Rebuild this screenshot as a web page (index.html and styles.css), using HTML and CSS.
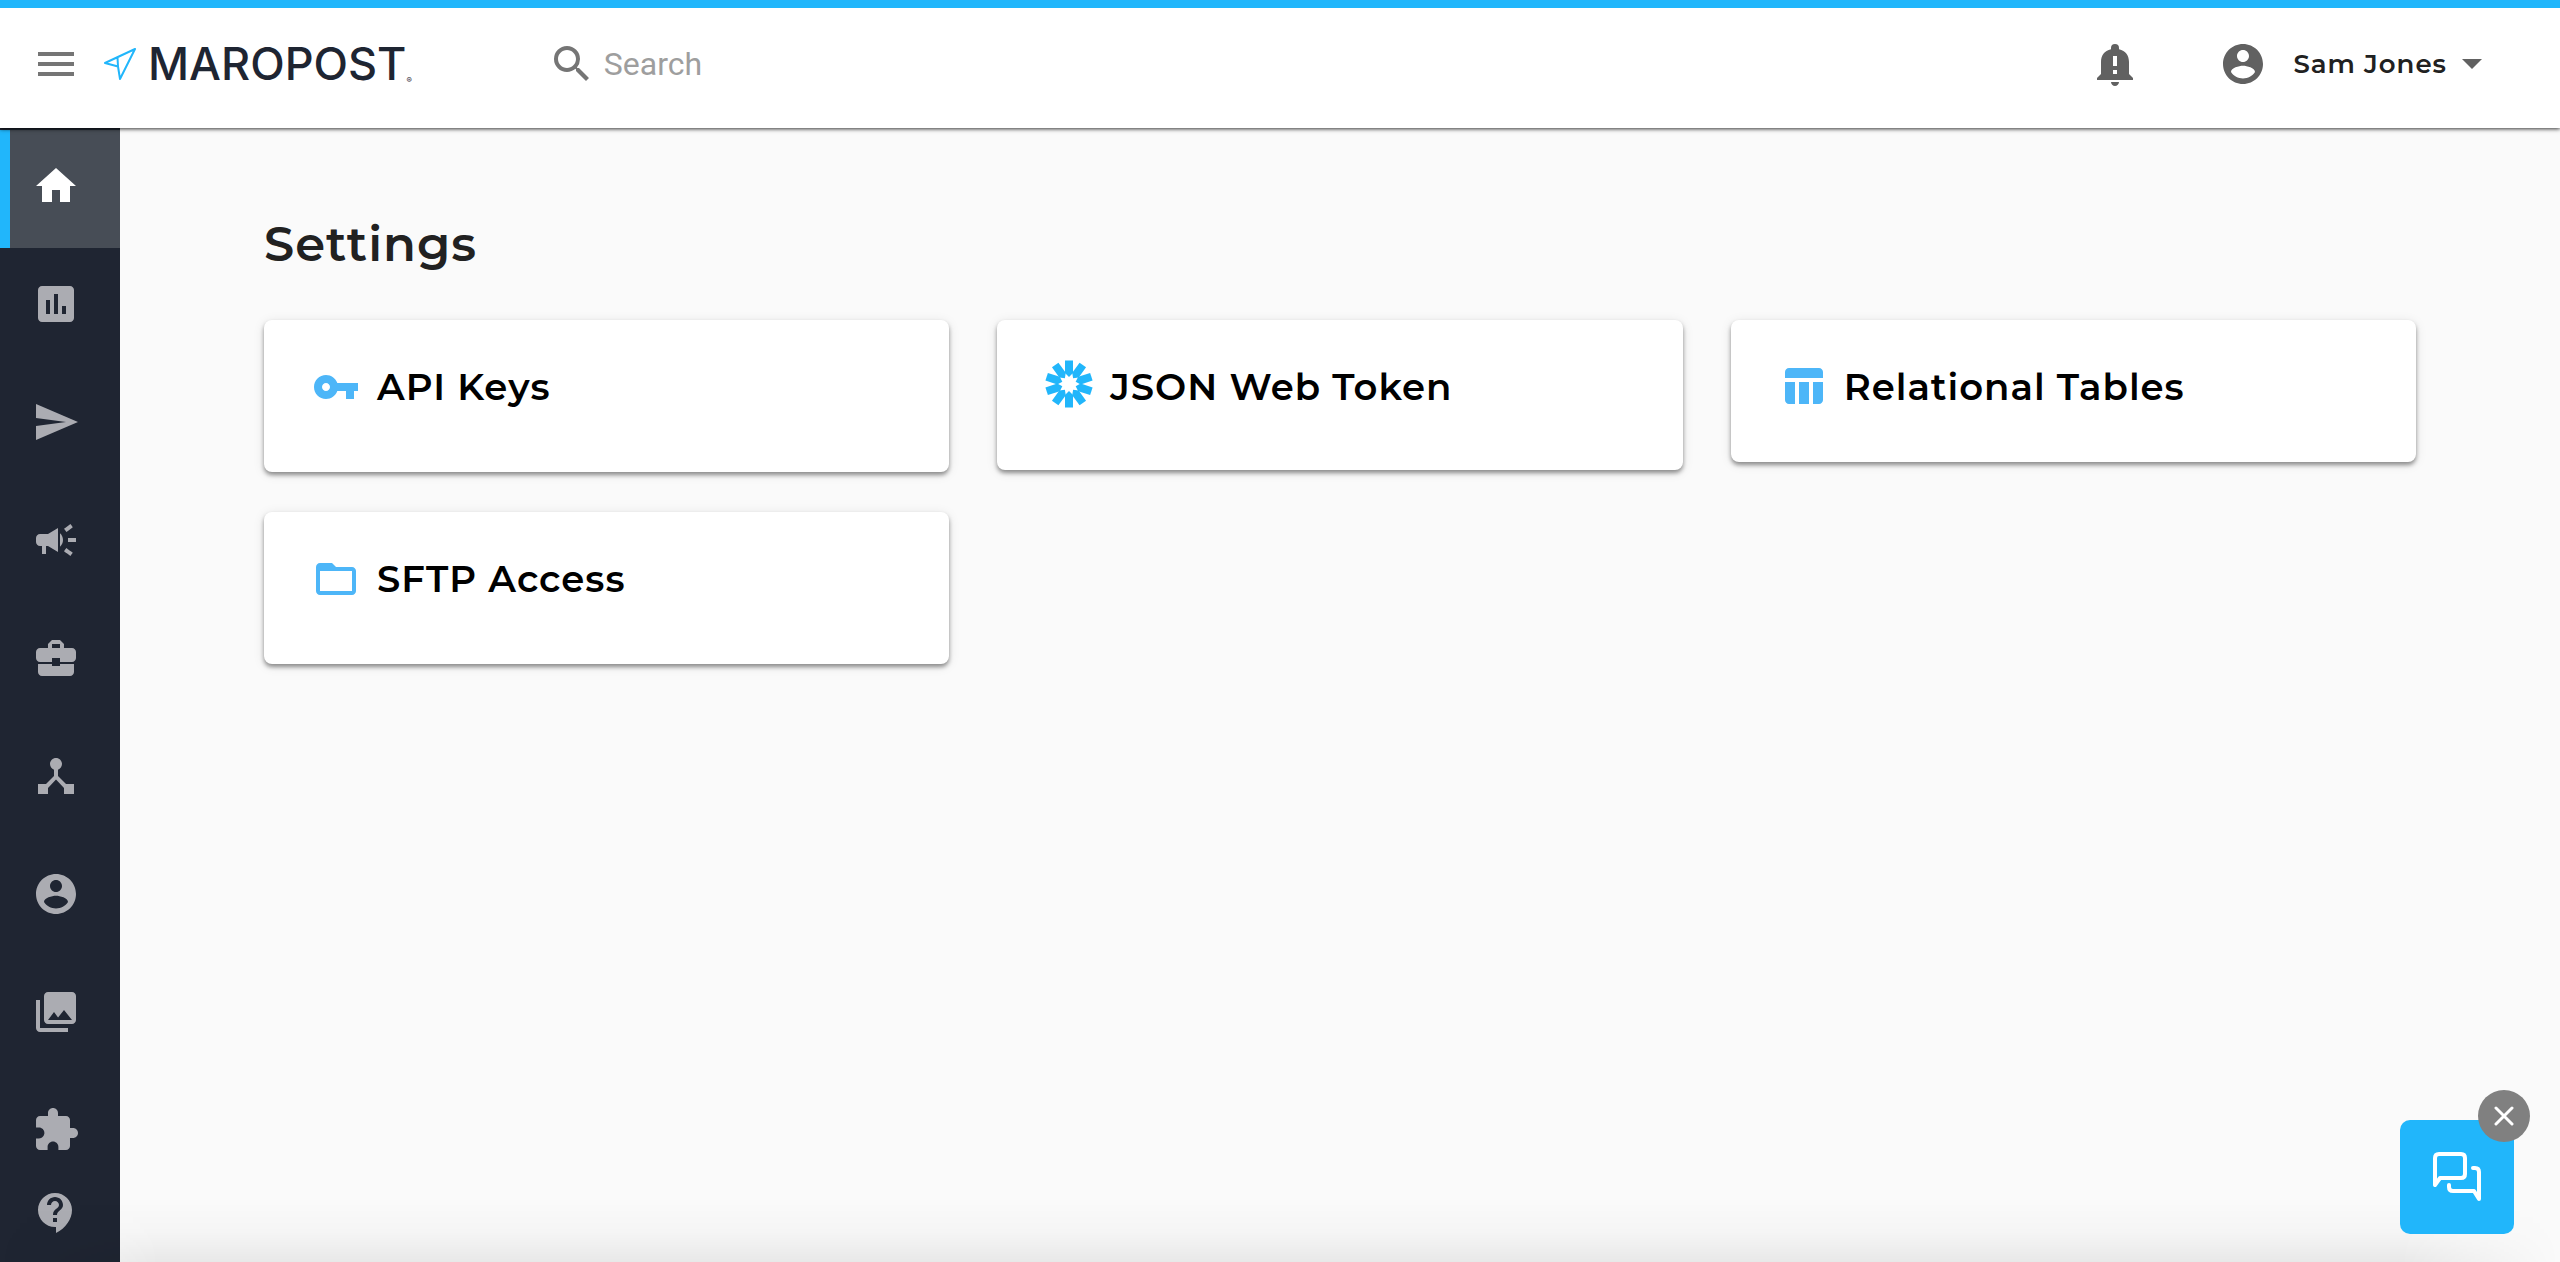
FILE: index.html
```html
<!DOCTYPE html>
<html lang="en">
<head>
<meta charset="utf-8">
<meta name="viewport" content="width=device-width, initial-scale=1">
<title>Settings - Maropost</title>
<link rel="stylesheet" href="styles.css">
</head>
<body>
<header class="topbar">
  <button class="icon-button menu-button" type="button" aria-label="Menu">
    <svg class="icon" viewBox="0 0 24 24"><path d="M3 18h18v-2H3v2zm0-5h18v-2H3v2zm0-7v2h18V6H3z"/></svg>
  </button>
  <a class="brand" href="#" aria-label="Maropost">
    <svg class="brand-mark" viewBox="0 0 32 32"><path d="M31 1 L1 15 L14 18.500 L16 31 Z M14 18.500 L13.500 9.500"/></svg>
    <span class="brand-name">MAROPOST</span><span class="brand-dot">®</span>
  </a>
  <label class="search">
    <svg class="icon" viewBox="0 0 24 24"><path d="M15.500 14h-.79l-.28-.27A6.471 6.471 0 0 0 16 9.500 6.500 6.500 0 1 0 9.500 16c1.610 0 3.090-.59 4.230-1.570l.27.280v.79l5 4.990L20.490 19l-4.990-5zm-6 0C7.010 14 5 11.990 5 9.500S7.010 5 9.500 5 14 7.010 14 9.500 11.990 14 9.500 14z"/></svg>
    <input class="search-input" type="text" placeholder="Search" aria-label="Search">
  </label>
  <button class="icon-button alert-button" type="button" aria-label="Notifications">
    <svg class="icon" viewBox="0 0 24 24"><path d="M12 23c1.100 0 2-.9 2-2h-4c0 1.100.9 2 2 2zM19 17l2 2v1H3v-1l2-2v-6c0-3.070 1.630-5.640 5-6.320V4a2 2 0 0 1 4 0v.68C17.360 5.360 19 7.920 19 11zM13 15h-2v2h2zm0-7h-2v5h2z" fill-rule="evenodd"/></svg>
  </button>
  <button class="account" type="button">
    <svg class="icon" viewBox="0 0 24 24"><path d="M12 2C6.480 2 2 6.480 2 12s4.480 10 10 10 10-4.480 10-10S17.520 2 12 2zm0 3c1.660 0 3 1.340 3 3s-1.340 3-3 3-3-1.340-3-3 1.340-3 3-3zm0 14.200c-2.500 0-4.710-1.280-6-3.220.03-1.990 4-3.080 6-3.080 1.990 0 5.970 1.090 6 3.080-1.290 1.940-3.500 3.220-6 3.220z"/></svg>
    <span class="account-name">Sam Jones</span>
    <svg class="caret" viewBox="0 0 20 10"><path d="M0 0h20L10 10z"/></svg>
  </button>
</header>
<div class="layout">
  <nav class="sidebar" aria-label="Main">
    <a class="nav-item nav-active" href="#" aria-label="Home"><svg class="icon" viewBox="0 0 24 24"><path d="M10 20v-6h4v6h5v-8h3L12 3 2 12h3v8z"/></svg></a>
    <a class="nav-item" href="#" aria-label="Reports"><svg class="icon" viewBox="0 0 24 24"><path d="M19 3H5c-1.100 0-2 .9-2 2v14c0 1.100.9 2 2 2h14c1.100 0 2-.9 2-2V5c0-1.100-.9-2-2-2zM9 17H7v-7h2v7zm4 0h-2V7h2v10zm4 0h-2v-4h2v4z"/></svg></a>
    <a class="nav-item" href="#" aria-label="Send"><svg class="icon" viewBox="0 0 24 24"><path d="M2.010 21L23 12 2.010 3 2 10l15 2-15 2z"/></svg></a>
    <a class="nav-item" href="#" aria-label="Campaigns"><svg class="icon" viewBox="0 0 24 24"><path d="M18 11v2h4v-2h-4zm-2 6.610c.96.710 2.210 1.650 3.200 2.390.4-.53.8-1.070 1.200-1.600-.99-.74-2.240-1.680-3.200-2.400-.4.540-.8 1.080-1.200 1.610zM20.400 5.600c-.4-.53-.8-1.070-1.200-1.600-.99.740-2.240 1.680-3.200 2.400.4.530.8 1.070 1.200 1.600.96-.72 2.210-1.650 3.200-2.400zM4 9c-1.100 0-2 .9-2 2v2c0 1.100.9 2 2 2h1v4h2v-4h1l5 3V6L8 9H4zm11.500 3c0-1.330-.58-2.530-1.500-3.350v6.690c.92-.81 1.500-2.010 1.500-3.340z"/></svg></a>
    <a class="nav-item" href="#" aria-label="Business"><svg class="icon" viewBox="0 0 24 24"><path d="M10 16v-1H3.010L3 19c0 1.110.89 2 2 2h14c1.110 0 2-.89 2-2v-4h-7v1h-4zm10-9h-4.010V5l-2-2h-4l-2 2v2H4c-1.100 0-2 .9-2 2v3c0 1.110.89 2 2 2h6v-2h4v2h6c1.100 0 2-.9 2-2V9c0-1.100-.9-2-2-2zm-6 0h-4V5h4v2z"/></svg></a>
    <a class="nav-item" href="#" aria-label="Journeys"><svg class="icon" viewBox="0 0 24 24"><path d="M17 16l-4-4V8.820C14.160 8.400 15 7.300 15 6c0-1.660-1.340-3-3-3S9 4.340 9 6c0 1.300.84 2.400 2 2.820V12l-4 4H3v5h5v-3.050l4-4.200 4 4.200V21h5v-5h-4z"/></svg></a>
    <a class="nav-item" href="#" aria-label="Contacts"><svg class="icon" viewBox="0 0 24 24"><path d="M12 2C6.480 2 2 6.480 2 12s4.480 10 10 10 10-4.480 10-10S17.520 2 12 2zm0 3c1.660 0 3 1.340 3 3s-1.340 3-3 3-3-1.340-3-3 1.340-3 3-3zm0 14.200c-2.500 0-4.710-1.280-6-3.220.03-1.990 4-3.080 6-3.080 1.990 0 5.970 1.090 6 3.080-1.290 1.940-3.500 3.220-6 3.220z"/></svg></a>
    <a class="nav-item" href="#" aria-label="Media"><svg class="icon" viewBox="0 0 24 24"><path d="M22 16V4c0-1.100-.9-2-2-2H8c-1.100 0-2 .9-2 2v12c0 1.100.9 2 2 2h12c1.100 0 2-.9 2-2zm-11-4l2.030 2.710L16 11l4 5H8l3-4zM2 6v14c0 1.100.9 2 2 2h14v-2H4V6H2z"/></svg></a>
    <a class="nav-item" href="#" aria-label="Integrations"><svg class="icon" viewBox="0 0 24 24"><path d="M20.500 11H19V7c0-1.100-.9-2-2-2h-4V3.500C13 2.120 11.880 1 10.500 1S8 2.120 8 3.500V5H4c-1.100 0-1.990.9-1.990 2v3.800H3.500c1.490 0 2.700 1.210 2.700 2.700s-1.210 2.700-2.700 2.700H2V20c0 1.100.9 2 2 2h3.800v-1.500c0-1.490 1.210-2.700 2.700-2.700 1.490 0 2.700 1.210 2.700 2.700V22H17c1.100 0 2-.9 2-2v-4h1.500c1.380 0 2.500-1.120 2.500-2.500S21.880 11 20.500 11z"/></svg></a>
    <a class="nav-item nav-help" href="#" aria-label="Help"><svg class="icon" viewBox="0 0 24 24"><path d="M11.500 2C6.810 2 3 5.810 3 10.500S6.810 19 11.500 19h.5v3c4.860-2.340 8-7 8-11.500C20 5.810 16.190 2 11.500 2zm1 14.500h-2v-2h2v2zm0-3.500h-2c0-3.250 3-3 3-5 0-1.100-.9-2-2-2s-2 .9-2 2h-2c0-2.210 1.790-4 4-4s4 1.790 4 4c0 2.500-3 2.750-3 5z"/></svg></a>
  </nav>
  <main class="content">
    <h1 class="page-title">Settings</h1>
    <div class="cards">
      <a class="card" href="#">
        <svg class="icon" viewBox="0 0 24 24"><path d="M12.650 10C11.830 7.670 9.610 6 7 6c-3.310 0-6 2.690-6 6s2.690 6 6 6c2.610 0 4.830-1.670 5.650-4H17v4h4v-4h2v-4H12.650zM7 14c-1.100 0-2-.9-2-2s.9-2 2-2 2 .9 2 2-.9 2-2 2z"/></svg>
        <span class="card-title">API Keys</span>
      </a>
      <a class="card card-medium" href="#">
        <svg class="icon icon-token" viewBox="-24 -24 48 48">
          <defs><path id="ray" d="M-4-23.500h8V-11L0-7-4-11z"/></defs>
          <use href="#ray"/><use href="#ray" transform="rotate(36)"/><use href="#ray" transform="rotate(72)"/><use href="#ray" transform="rotate(108)"/><use href="#ray" transform="rotate(144)"/><use href="#ray" transform="rotate(180)"/><use href="#ray" transform="rotate(216)"/><use href="#ray" transform="rotate(252)"/><use href="#ray" transform="rotate(288)"/><use href="#ray" transform="rotate(324)"/>
        </svg>
        <span class="card-title">JSON Web Token</span>
      </a>
      <a class="card card-short" href="#">
        <svg class="icon" viewBox="0 0 24 24"><path d="M10 9.520h5V20.500h-5V9.520zM17 20.500h3c1.100 0 2-.9 2-2v-9h-5v11zm3-18H5c-1.100 0-2 .9-2 2v3h19v-3c0-1.100-.9-2-2-2zM3 18.500c0 1.100.9 2 2 2h3v-11H3v9z"/></svg>
        <span class="card-title">Relational Tables</span>
      </a>
      <a class="card" href="#">
        <svg class="icon" viewBox="0 0 24 24"><path d="M20 6h-8l-2-2H4c-1.100 0-1.990.9-1.990 2L2 18c0 1.100.9 2 2 2h16c1.100 0 2-.9 2-2V8c0-1.100-.9-2-2-2zm0 12H4V8h16v10z"/></svg>
        <span class="card-title">SFTP Access</span>
      </a>
    </div>
  </main>
</div>
<div class="bottom-fade"></div>
<div class="chat">
  <button class="chat-open" type="button" aria-label="Open chat">
    <svg class="chat-icon" viewBox="0 0 48 50"><path d="M2 33V6q0-4 4-4h22q4 0 4 4v16q0 4-4 4H7zM40 16h2q4 0 4 4v27l-5-8H20q-4 0-4-4v-2"/></svg>
  </button>
  <button class="chat-close" type="button" aria-label="Close chat">
    <svg class="close-icon" viewBox="0 0 20 20"><path d="M2 2l16 16M18 2L2 18"/></svg>
  </button>
</div>
</body>
</html>
```
FILE: styles.css
```css
* {
  box-sizing: border-box;
}

body {
  margin: 0;
  min-height: 100vh;
  display: flex;
  flex-direction: column;
  background: #fafafa;
  color: #212121;
  font-family: Montserrat, Inter, sans-serif;
}

button {
  border: 0;
  padding: 0;
  background: none;
  font: inherit;
  color: inherit;
  cursor: pointer;
}

a {
  color: inherit;
  text-decoration: none;
}

.icon {
  display: block;
  flex: none;
  width: 48px;
  height: 48px;
  fill: currentColor;
}

.topbar {
  position: relative;
  z-index: 2;
  display: flex;
  align-items: center;
  height: 128px;
  padding: 0 78px 8px 32px;
  border-top: 8px solid #21b6fb;
  background: #fff;
  box-shadow: 0 1px 4px rgba(0, 0, 0, 0.8);
}

.menu-button {
  color: #757575;
}

.brand {
  display: flex;
  align-items: center;
  margin-left: 24px;
  color: #1e2532;
}

.brand-mark {
  width: 32px;
  height: 32px;
  fill: none;
  stroke: #21b6fb;
  stroke-width: 2;
  stroke-linejoin: round;
}

.brand-name {
  margin-left: 12px;
  font: 500 45px/48px Inter, sans-serif;
}

.brand-dot {
  align-self: flex-end;
  font: 400 8px/16px Inter, sans-serif;
}

.search {
  display: flex;
  align-items: center;
  flex: 1;
  gap: 8px;
  margin-left: 136px;
  color: #757575;
}

.search-input {
  flex: 1;
  min-width: 0;
  border: 0;
  padding: 0;
  outline: 0;
  background: transparent;
  font: 400 32px/40px Roboto, sans-serif;
}

.search-input::placeholder {
  color: #9e9e9e;
}

.alert-button,
.account {
  color: #616161;
}

.account {
  display: flex;
  align-items: center;
  margin-left: 80px;
}

.account-name {
  margin: 0 15px 0 26px;
  color: #212121;
  font-size: 26px;
  font-weight: 600;
  letter-spacing: 1px;
}

.caret {
  width: 20px;
  height: 10px;
  fill: currentColor;
}

.layout {
  display: flex;
  flex: 1;
}

.sidebar {
  display: flex;
  flex-direction: column;
  flex: none;
  width: 120px;
  padding-top: 2px;
  background: #1f2532;
  color: #abacb2;
}

.nav-item {
  display: flex;
  align-items: center;
  height: 118px;
  padding: 0 0 6px 32px;
}

.nav-active {
  padding-left: 22px;
  border-left: 10px solid #21b6fb;
  background: #474d56;
  color: #fff;
}

.nav-help {
  height: 48px;
}

.content {
  flex: 1;
  padding: 80px 144px;
}

.page-title {
  margin: 0 0 40px;
  font-size: 48px;
  line-height: 72px;
  font-weight: 600;
  letter-spacing: 1px;
}

.cards {
  display: grid;
  grid-template-columns: repeat(3, 1fr);
  gap: 40px 48px;
  align-items: start;
}

.card {
  display: flex;
  align-items: flex-start;
  gap: 17px;
  height: 152px;
  padding: 43px 48px;
  border-radius: 8px;
  background: #fff;
  box-shadow: 0 3px 4px rgba(0, 0, 0, 0.4), 0 2px 12px rgba(0, 0, 0, 0.1);
  color: #4db6f8;
}

.card-medium {
  height: 150px;
}

.card-short {
  height: 142px;
}

.icon-token {
  margin-top: -3px;
  color: #21b6fb;
}

.card-title {
  color: #000;
  font-size: 37px;
  line-height: 48px;
  font-weight: 600;
  letter-spacing: 1px;
}

.bottom-fade {
  position: fixed;
  inset: auto 0 0;
  height: 60px;
  background: linear-gradient(transparent, rgba(0, 0, 0, 0.02) 50%, rgba(0, 0, 0, 0.07));
  mask-image: linear-gradient(90deg, transparent, #000 160px, #000 calc(100% - 160px), transparent);
  pointer-events: none;
}

.chat {
  position: fixed;
  right: 46px;
  bottom: 28px;
}

.chat-open {
  display: grid;
  place-items: center;
  width: 114px;
  height: 114px;
  border-radius: 10px;
  background: #21b6fb;
}

.chat-icon {
  width: 48px;
  height: 50px;
  fill: none;
  stroke: #fff;
  stroke-width: 4;
  stroke-linecap: round;
  stroke-linejoin: round;
}

.chat-close {
  position: absolute;
  top: -30px;
  right: -16px;
  display: grid;
  place-items: center;
  width: 52px;
  height: 52px;
  border-radius: 50%;
  background: #808080;
}

.close-icon {
  width: 20px;
  height: 20px;
  fill: none;
  stroke: #fff;
  stroke-width: 3;
  stroke-linecap: round;
}
```
